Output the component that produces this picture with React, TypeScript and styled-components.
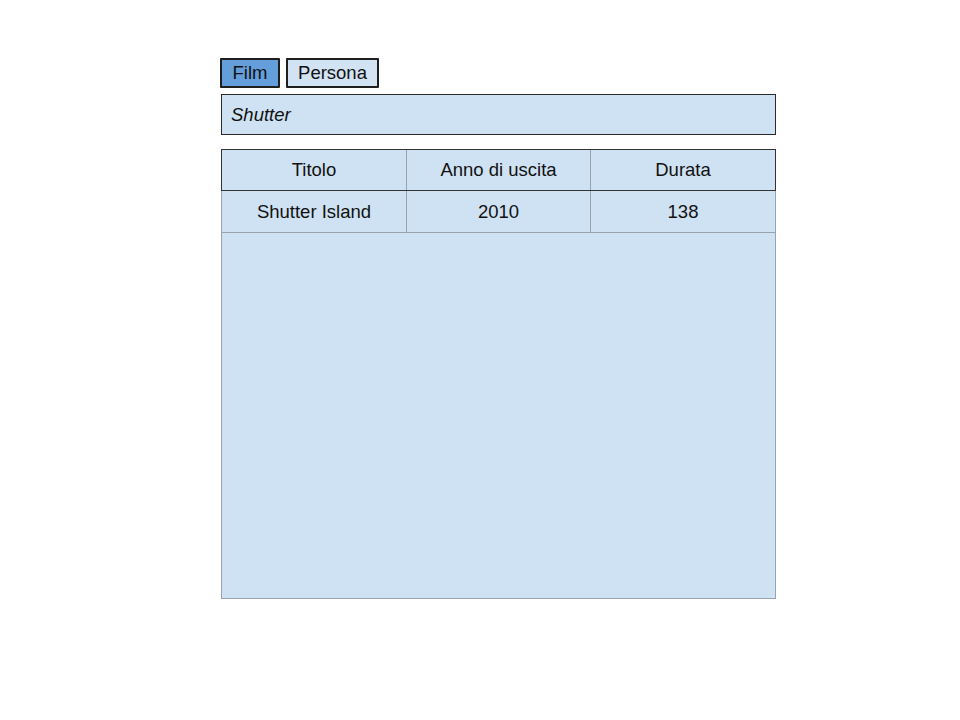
import React from "react";
import styled, { createGlobalStyle } from "styled-components";

const Global = createGlobalStyle`
  html, body { margin: 0; padding: 0; background: #ffffff; }
  body { font-family: "Liberation Sans", Arial, sans-serif; color: #111; }
`;

const Page = styled.div`
  width: 960px;
  height: 720px;
  box-sizing: border-box;
  padding: 58px 0 0 220px;
  display: flex;
  flex-direction: column;
`;

const Tabs = styled.div`
  display: flex;
  gap: 6px;
  height: 30px;
`;

const TabButton = styled.button<{ $active?: boolean; $width: number }>`
  box-sizing: border-box;
  height: 30px;
  width: ${(p) => p.$width}px;
  padding: 0;
  margin: 0;
  border: 2px solid #1e1e1e;
  border-radius: 1px;
  background: ${(p) => (p.$active ? "#649fdb" : "#d2e3f4")};
  font-family: "Liberation Sans", Arial, sans-serif;
  font-size: 18.5px;
  color: #111;
  display: flex;
  align-items: center;
  justify-content: center;
`;

const Search = styled.div`
  box-sizing: border-box;
  margin: 6px 0 0 1px;
  width: 555px;
  height: 41px;
  border: 1px solid #2a2a2a;
  background: #cfe2f3;
  display: flex;
  align-items: center;
  padding-left: 9px;
  font-style: italic;
  font-size: 18.5px;
  color: #111;
`;

const Table = styled.div`
  box-sizing: border-box;
  margin: 14px 0 0 1px;
  width: 555px;
  height: 450px;
  display: flex;
  flex-direction: column;
  background: #cfe2f3;
`;

const Row = styled.div<{ $head?: boolean }>`
  box-sizing: border-box;
  display: grid;
  grid-template-columns: 184px 184px 1fr;
  height: 42px;
  border: 1px solid ${(p) => (p.$head ? "#333" : "#9aa3ab")};
  border-top: ${(p) => (p.$head ? "1px solid #333" : "none")};
`;

const Cell = styled.div<{ $head?: boolean }>`
  display: flex;
  align-items: center;
  justify-content: center;
  font-size: 18.5px;
  color: #111;
  & + & {
    border-left: 1px solid ${(p) => (p.$head ? "#333" : "#9aa3ab")};
  }
`;

const Empty = styled.div`
  flex: 1;
  box-sizing: border-box;
  border: 1px solid #9aa3ab;
  border-top: none;
`;

export default function App() {
  return (
    <>
      <Global />
      <Page>
        <Tabs>
          <TabButton $active $width={60}>Film</TabButton>
          <TabButton $width={93}>Persona</TabButton>
        </Tabs>
        <Search>Shutter</Search>
        <Table>
          <Row $head>
            <Cell $head>Titolo</Cell>
            <Cell $head>Anno di uscita</Cell>
            <Cell $head>Durata</Cell>
          </Row>
          <Row>
            <Cell>Shutter Island</Cell>
            <Cell>2010</Cell>
            <Cell>138</Cell>
          </Row>
          <Empty />
        </Table>
      </Page>
    </>
  );
}
